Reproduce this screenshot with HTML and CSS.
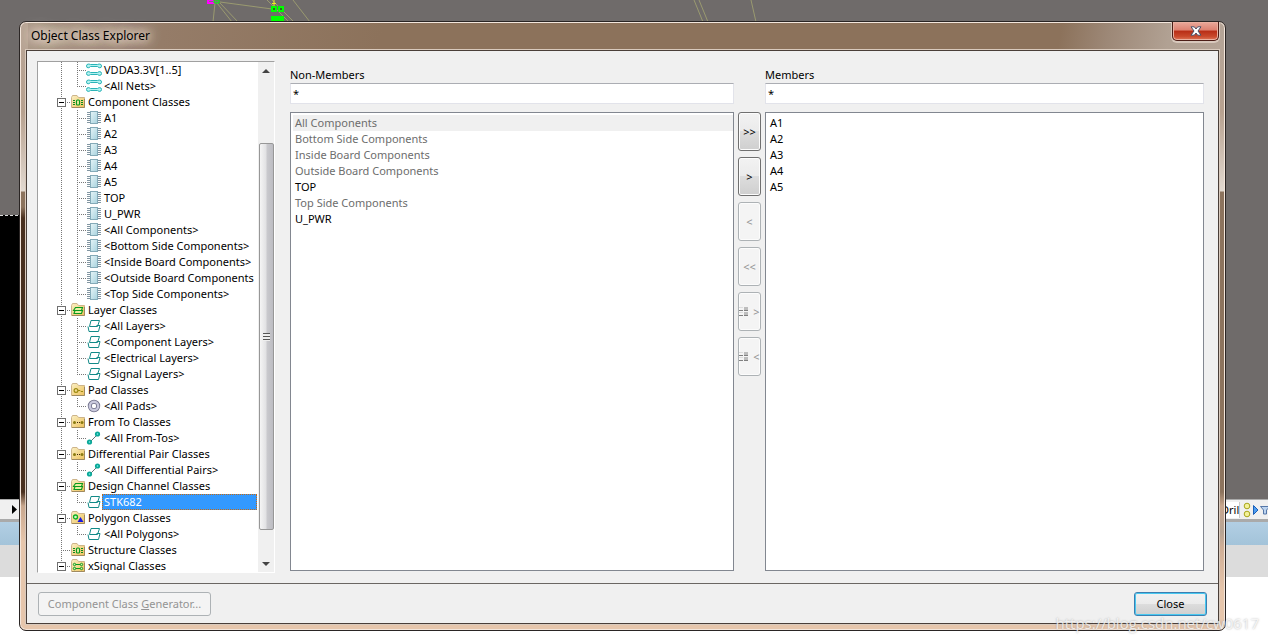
FILE: index.html
```html
<!DOCTYPE html>
<html lang="en">
<head>
<meta charset="utf-8">
<title>Object Class Explorer</title>
<link rel="stylesheet" href="styles.css">
</head>
<body>
<svg class="defs" aria-hidden="true">
  <defs>
    <linearGradient id="gold" x1="0" y1="0" x2="1" y2="1"><stop offset="0" stop-color="#fbf0c4"/><stop offset="1" stop-color="#edc15c"/></linearGradient>
    <linearGradient id="chipfill" x1="0" y1="0" x2="1" y2="1"><stop offset="0" stop-color="#e6f5f8"/><stop offset="1" stop-color="#a8d2de"/></linearGradient>
    <symbol id="folder" viewBox="0 0 14 14">
      <path d="M.5 12.500V2.500L1.500.5H6L7.500 2.500H13.500V12.500Z" fill="url(#gold)" stroke="#cdb48a"/>
      <path d="M1 12.500H13.500V4" fill="none" stroke="#a08a60"/>
    </symbol>
    <symbol id="f-chip" viewBox="0 0 14 14"><use href="#folder"/><path d="M2 5.500h2M2 7.500h2M2 9.500h2M10 5.500h2M10 7.500h2M10 9.500h2" stroke="#0a8a1e"/><rect x="5.500" y="5" width="3" height="5" rx="1" fill="#f4f0a8" stroke="#0a9a1e" stroke-width="1.200"/></symbol>
    <symbol id="f-layer" viewBox="0 0 14 14"><use href="#folder"/><path d="M4.500 4.500H11.500L10.500 7.500H2.500ZM4 7.500H11.500L10.500 10.500H3Z" fill="#e8efa0" stroke="#0a9a1e" stroke-width="1.100"/></symbol>
    <symbol id="f-pad" viewBox="0 0 14 14"><use href="#folder"/><circle cx="5" cy="7.500" r="1.900" fill="none" stroke="#9c8a10" stroke-width="1.200"/><path d="M7 7.500h2l1 1h2" fill="none" stroke="#9c8a10"/></symbol>
    <symbol id="f-dots" viewBox="0 0 14 14"><use href="#folder"/><circle cx="3.500" cy="7.500" r="1.500" fill="#8a7a10"/><circle cx="11" cy="7.500" r="1.500" fill="#8a7a10"/><path d="M6 7.500h1M8 7.500h1" stroke="#402a10" stroke-width="1"/></symbol>
    <symbol id="f-poly" viewBox="0 0 14 14"><use href="#folder"/><circle cx="4.500" cy="6" r="2" fill="#d8f5c8" stroke="#0ab020" stroke-width="1.300"/><path d="M9.500 6L12.500 11H6.500Z" fill="#1818e0"/></symbol>
    <symbol id="f-sig" viewBox="0 0 14 14"><use href="#folder"/><path d="M3 5.500h8M3 9.500h8" stroke="#0a9a1e"/><g fill="#d8f0a8" stroke="#0a9a1e"><circle cx="3.500" cy="5.500" r="1.200"/><circle cx="10.500" cy="5.500" r="1.200"/><circle cx="3.500" cy="9.500" r="1.200"/><circle cx="10.500" cy="9.500" r="1.200"/></g></symbol>
    <symbol id="net" viewBox="0 0 16 14"><g fill="#b4f2f0" stroke="#2ab4b8"><path d="M1 1.500Q3 .5 4.500 1.500H11.500Q13 .5 15 1.500Q16 3 15 4.500Q13 5.500 11.500 3.500H4.500Q3 5.500 1 4.500Q0 3 1 1.500Z"/><path d="M1 9Q3 8 4.500 9.500H11.500Q13 8 15 9Q16 10.500 15 12Q13 13 11.500 11.500H4.500Q3 13 1 12Q0 10.500 1 9Z"/></g></symbol>
    <symbol id="chip" viewBox="0 0 16 14"><path d="M1 1.500h14M1 3.500h14M1 5.500h14M1 7.500h14M1 9.500h14M1 11.500h14" stroke="#8296a2"/><rect x="4.500" y=".5" width="7" height="12" fill="url(#chipfill)" stroke="#84aab8"/></symbol>
    <symbol id="layer" viewBox="0 0 16 14"><path d="M5 1.500H13.500L11.500 7.500H3.500ZM10.500 6.500H14L12.500 12.500H3L2 7.500" fill="none" stroke="#128a88"/></symbol>
    <symbol id="pad" viewBox="0 0 16 14"><circle cx="8" cy="7" r="4.200" fill="none" stroke="#72728c" stroke-width="4"/><circle cx="8" cy="7" r="4.200" fill="none" stroke="#c9c9dd" stroke-width="2.400"/></symbol>
    <symbol id="link" viewBox="0 0 16 14"><path d="M5 10L11 4" stroke="#68747a"/><circle cx="3.500" cy="11" r="2.600" fill="#0aa898"/><circle cx="11.500" cy="3" r="2.600" fill="#0aa898"/><circle cx="11.500" cy="3" r=".8" fill="#8ee"/><circle cx="3.500" cy="11" r=".8" fill="#8ee"/></symbol>
    <symbol id="rows" viewBox="0 0 10 10"><path d="M0 3.500h4M0 8.500h4M5 3.500h4M5 8.500h4" stroke="#808080"/><path d="M0 .5h4M0 5.500h4" stroke="#ddd"/><path d="M5 1.500h4M5 6.500h4" stroke="#bdbdbd" stroke-width="3"/></symbol>
  </defs>
</svg>

<div class="desktop" aria-hidden="true">
  <div class="board">
    <div class="board-top">
      <svg class="traces" width="800" height="22">
        <path d="M215 3L213 22M217 3L232 22M220 3L238 22M220 2L272 9M267 0L289 22M272 0L294 22M293 0L310 22M694 0L703 22M699 0L708 22M751 0L756 22" fill="none" stroke="#9a9a70"/>
        <path d="M208 0h6v3h-6z" fill="#777" stroke="#f0f" stroke-width="2"/><path d="M214 0h5v3h-5z" fill="#777" stroke="#0f0"/>
        <path d="M271 6h6v6h-6zM278 6h6v6h-6zM271 16h13v6h-13z" fill="#0f0"/><path d="M272 3.500h4M274 0v6" stroke="#ee2"/><path d="M273 8h2v2h-2zM280 8h2v2h-2z" fill="#2a6a20"/>
      </svg>
    </div>
    <div class="board-void"></div>
  </div>
  <div class="toolbar">
    <svg class="nudge" width="6" height="9"><path d="M0 0L5 4.500L0 9Z"/></svg>
    <div class="tool-tail"><span class="drill">Dril</span>
      <svg width="26" height="18"><g fill="#f4f29a" stroke="#a9a61c"><circle cx="5" cy="5" r="2.800"/><circle cx="5" cy="13" r="2.800"/></g><path d="M11.500 4.500L16 9L11.500 13.500Z" fill="#4b9cf0" stroke="#1b5fb8"/><path d="M18.500 5.500H28L24.500 9V13H21.500V9Z" fill="#bcd4f0" stroke="#5577a8"/></svg>
    </div>
  </div>
  <div class="band-gray"></div><div class="band-blue"></div><div class="band-light"></div><div class="band-white"></div>
</div>

<main class="dialog" role="dialog" aria-labelledby="dlg-title">
  <header class="titlebar">
    <h1 id="dlg-title" class="title">Object Class Explorer</h1>
    <button class="close-x" type="button" aria-label="Close window"><svg width="12" height="10"><path d="M1 .8H4.300L6 3L7.700 .8H11L8 5L11 9.200H7.700L6 7L4.300 9.200H1L4 5Z" fill="#fff" stroke="#4a5068"/></svg></button>
  </header>
  <div class="client">
    <div class="content">
      <nav class="tree-box" aria-label="Object classes">
        <ul class="tree">
          <li class="group"><ul class="kids">
            <li class="leaf"><svg class="ico"><use href="#net"/></svg><span class="label">VDDA3.3V[1..5]</span></li>
            <li class="leaf"><svg class="ico"><use href="#net"/></svg><span class="label">&lt;All Nets&gt;</span></li>
          </ul></li>
          <li class="group"><div class="node"><button class="toggle" type="button" aria-label="Collapse"></button><svg class="fico"><use href="#f-chip"/></svg><span>Component Classes</span></div><ul class="kids">
            <li class="leaf"><svg class="ico"><use href="#chip"/></svg><span class="label">A1</span></li>
            <li class="leaf"><svg class="ico"><use href="#chip"/></svg><span class="label">A2</span></li>
            <li class="leaf"><svg class="ico"><use href="#chip"/></svg><span class="label">A3</span></li>
            <li class="leaf"><svg class="ico"><use href="#chip"/></svg><span class="label">A4</span></li>
            <li class="leaf"><svg class="ico"><use href="#chip"/></svg><span class="label">A5</span></li>
            <li class="leaf"><svg class="ico"><use href="#chip"/></svg><span class="label">TOP</span></li>
            <li class="leaf"><svg class="ico"><use href="#chip"/></svg><span class="label">U_PWR</span></li>
            <li class="leaf"><svg class="ico"><use href="#chip"/></svg><span class="label">&lt;All Components&gt;</span></li>
            <li class="leaf"><svg class="ico"><use href="#chip"/></svg><span class="label">&lt;Bottom Side Components&gt;</span></li>
            <li class="leaf"><svg class="ico"><use href="#chip"/></svg><span class="label">&lt;Inside Board Components&gt;</span></li>
            <li class="leaf"><svg class="ico"><use href="#chip"/></svg><span class="label">&lt;Outside Board Components</span></li>
            <li class="leaf"><svg class="ico"><use href="#chip"/></svg><span class="label">&lt;Top Side Components&gt;</span></li>
          </ul></li>
          <li class="group"><div class="node"><button class="toggle" type="button" aria-label="Collapse"></button><svg class="fico"><use href="#f-layer"/></svg><span>Layer Classes</span></div><ul class="kids">
            <li class="leaf"><svg class="ico"><use href="#layer"/></svg><span class="label">&lt;All Layers&gt;</span></li>
            <li class="leaf"><svg class="ico"><use href="#layer"/></svg><span class="label">&lt;Component Layers&gt;</span></li>
            <li class="leaf"><svg class="ico"><use href="#layer"/></svg><span class="label">&lt;Electrical Layers&gt;</span></li>
            <li class="leaf"><svg class="ico"><use href="#layer"/></svg><span class="label">&lt;Signal Layers&gt;</span></li>
          </ul></li>
          <li class="group"><div class="node"><button class="toggle" type="button" aria-label="Collapse"></button><svg class="fico"><use href="#f-pad"/></svg><span>Pad Classes</span></div><ul class="kids">
            <li class="leaf"><svg class="ico"><use href="#pad"/></svg><span class="label">&lt;All Pads&gt;</span></li>
          </ul></li>
          <li class="group"><div class="node"><button class="toggle" type="button" aria-label="Collapse"></button><svg class="fico"><use href="#f-dots"/></svg><span>From To Classes</span></div><ul class="kids">
            <li class="leaf"><svg class="ico"><use href="#link"/></svg><span class="label">&lt;All From-Tos&gt;</span></li>
          </ul></li>
          <li class="group"><div class="node"><button class="toggle" type="button" aria-label="Collapse"></button><svg class="fico"><use href="#f-dots"/></svg><span>Differential Pair Classes</span></div><ul class="kids">
            <li class="leaf"><svg class="ico"><use href="#link"/></svg><span class="label">&lt;All Differential Pairs&gt;</span></li>
          </ul></li>
          <li class="group"><div class="node"><button class="toggle" type="button" aria-label="Collapse"></button><svg class="fico"><use href="#f-layer"/></svg><span>Design Channel Classes</span></div><ul class="kids">
            <li class="leaf"><svg class="ico"><use href="#layer"/></svg><span class="label selected">STK682</span></li>
          </ul></li>
          <li class="group"><div class="node"><button class="toggle" type="button" aria-label="Collapse"></button><svg class="fico"><use href="#f-poly"/></svg><span>Polygon Classes</span></div><ul class="kids">
            <li class="leaf"><svg class="ico"><use href="#layer"/></svg><span class="label">&lt;All Polygons&gt;</span></li>
          </ul></li>
          <li class="group"><div class="node"><span class="no-toggle"></span><svg class="fico"><use href="#f-chip"/></svg><span>Structure Classes</span></div></li>
          <li class="group"><div class="node"><button class="toggle" type="button" aria-label="Collapse"></button><svg class="fico"><use href="#f-sig"/></svg><span>xSignal Classes</span></div></li>
        </ul>
        <div class="scrollbar" aria-hidden="true">
          <svg class="arrow" width="8" height="4"><path d="M0 4L4 0L8 4Z" fill="#444"/></svg>
          <div class="track"><div class="thumb"><span class="grip"></span></div></div>
          <svg class="arrow" width="8" height="4"><path d="M0 0L4 4L8 0Z" fill="#444"/></svg>
        </div>
      </nav>
      <div class="transfer">
        <div class="field"><label for="nm">Non-Members</label><input id="nm" type="text" value="*"></div>
        <div class="field members"><label for="mm">Members</label><input id="mm" type="text" value="*"></div>
        <ul class="list" aria-label="Non-Members">
          <li class="item fixed hot">All Components</li>
          <li class="item fixed">Bottom Side Components</li>
          <li class="item fixed">Inside Board Components</li>
          <li class="item fixed">Outside Board Components</li>
          <li class="item">TOP</li>
          <li class="item fixed">Top Side Components</li>
          <li class="item">U_PWR</li>
        </ul>
        <div class="moves">
          <button class="move" type="button">&gt;&gt;</button>
          <button class="move" type="button">&gt;</button>
          <button class="move" type="button" disabled>&lt;</button>
          <button class="move" type="button" disabled>&lt;&lt;</button>
          <button class="move with-icon" type="button" disabled><svg width="10" height="10"><use href="#rows"/></svg>&gt;</button>
          <button class="move with-icon" type="button" disabled><svg width="10" height="10"><use href="#rows"/></svg>&lt;</button>
        </div>
        <ul class="list" aria-label="Members">
          <li class="item">A1</li>
          <li class="item">A2</li>
          <li class="item">A3</li>
          <li class="item">A4</li>
          <li class="item">A5</li>
        </ul>
      </div>
    </div>
    <footer class="footer">
      <button class="btn generator" type="button" disabled>Component Class <u>G</u>enerator...</button>
      <button class="btn primary" type="button">Close</button>
    </footer>
  </div>
</main>
<div class="watermark">https://blog.csdn.net/cw0617</div>
</body>
</html>
```

FILE: styles.css
```css
* { box-sizing: border-box; }
html { height: 100%; }
body {
  position: relative;
  display: flex;
  height: 100%;
  min-height: 600px;
  margin: 0;
  padding: 21px 42px 10px 19px;
  overflow: hidden;
  font: 11px/16px "Noto Sans", "Open Sans", sans-serif;
  color: #000;
}
ul { list-style: none; margin: 0; padding: 0; }
button, input { font: inherit; color: inherit; }
.defs { position: absolute; width: 0; height: 0; }

/* Application behind the dialog */
.desktop {
  position: absolute;
  inset: 0;
  display: grid;
  grid-template-rows: 1fr 20px 3px 23px 32px 64px;
}
.board { display: flex; flex-direction: column; background: #6f6b6a; }
.board-top { flex: 215; }
.board-void { flex: 284; width: 50%; background: #000; border-top: 1px dashed #ddd; }
.traces { display: block; }
.toolbar {
  display: flex;
  align-items: center;
  justify-content: space-between;
  padding-left: 12px;
  background: #f0f0f0;
  border-top: 1px solid #aaa;
}
.tool-tail { display: flex; align-items: center; }
.drill { width: 19px; background: #fff; border-right: 1px solid #ccc; margin-right: 2px; }
.band-gray { background: #aaa; }
.band-blue { background: linear-gradient(#b2cfe4, #a3c3d9); }
.band-light { background: #dcdcdc; }
.band-white { background: #fff; }

/* Window frame */
.dialog {
  position: relative;
  display: flex;
  flex: 1;
  flex-direction: column;
  padding: 0 6px;
  padding-bottom: 6px;
  border: 1px solid #2a2524;
  border-radius: 7px;
  box-shadow: inset 0 0 0 1px #f3e6dc;
  background:
    linear-gradient(#b8a494 0 28px, #b7a18f 90px, #e2d9d0 169px, #8c735d 170px 185px, #49301f 196px 470px, #c8a78e 484px, #e6c6ac 520px) left / 8px 100% no-repeat,
    linear-gradient(#b5a496 0 28px, #b7a18f 90px, #e2d9d0 169px, #8c735d 170px 470px, #c8a78e 484px, #b5a393 510px, #cfae96 525px, #e6c6ac 570px) right / 8px 100% no-repeat,
    linear-gradient(100deg, #ad998a, #957c68 12%, #8c725b 30% 86%, #9d8877 90%, #b1a193 95%, #b5a496) top / 100% 40px no-repeat,
    #e6c6ac;
}
.titlebar {
  display: flex;
  justify-content: space-between;
  align-items: flex-start;
  height: 28px;
  padding: 0 0 0 5px;
}
.title {
  margin: 5px 0 0;
  font: 12px/18px "Noto Sans", "Open Sans", sans-serif;
  text-shadow: 0 0 8px #eee0d4, 0 0 10px #eee0d4, 0 0 14px #eee0d4, 0 0 18px #eee0d4;
}
.close-x {
  display: grid;
  place-items: center;
  width: 47px;
  height: 19px;
  padding: 0;
  border: 1px solid #4c1d16;
  border-top: 0;
  border-radius: 0 0 5px 5px;
  box-shadow: inset 0 0 0 1px #eab0a0, 0 1px 0 1px #d8c8bc;
  background: linear-gradient(#eaa99b, #dd8170 45%, #b82d16 50%, #c9492c 80%, #df7759);
}
.client {
  display: flex;
  flex: 1;
  flex-direction: column;
  min-height: 0;
  border: 1px solid #4a3f39;
  box-shadow: 0 0 0 1px #d9cabd;
  background: #f0f0f0;
}
.content {
  display: flex;
  flex: 1;
  gap: 15px;
  min-height: 0;
  padding: 10px 14px 10px 10px;
}

/* Class tree */
.tree-box {
  display: flex;
  width: 238px;
  border: 1px solid #a0a0a0;
  border-right-color: #fff;
  border-bottom-color: #fff;
  background: #fff;
  overflow: hidden;
}
.tree { flex: 1; min-width: 0; overflow: hidden; padding-right: 1px; white-space: nowrap; }
.group { background: repeating-linear-gradient(#777 0 1px, #fff 1px 2px) 23px 0 / 1px 100% no-repeat; }
.kids { background: repeating-linear-gradient(#777 0 1px, transparent 1px 2px) 39px 0 / 1px calc(100% - 7px) no-repeat; }
.node, .leaf { display: flex; align-items: center; height: 16px; }
.node {
  padding-left: 19px;
  background: repeating-linear-gradient(90deg, #777 0 1px, transparent 1px 2px) 23px 8px / 10px 1px no-repeat;
}
.leaf {
  padding-left: 48px;
  background: repeating-linear-gradient(90deg, #777 0 1px, transparent 1px 2px) 39px 8px / 9px 1px no-repeat;
}
.toggle, .no-toggle { flex: none; width: 9px; height: 9px; }
.toggle {
  padding: 0;
  border: 1px solid #707070;
  background: linear-gradient(#000, #000) center / 5px 1px no-repeat #fff;
}
.ico { flex: none; width: 16px; height: 14px; }
.fico { flex: none; width: 14px; height: 14px; margin: 0 3px 0 5px; }
.label { flex: 1; padding-left: 2px; }
.selected {
  height: 16px;
  background: #3399ff;
  color: #fff;
  outline: 1px dotted #c86a10;
  outline-offset: -1px;
}
.scrollbar {
  display: flex;
  flex-direction: column;
  align-items: center;
  width: 16px;
  padding: 7px 0 6px;
  background: #f0f0f0;
}
.arrow { flex: none; }
.track {
  display: grid;
  grid-template-rows: 70fr 386fr 32fr;
  flex: 1;
  width: 15px;
}
.thumb {
  grid-row: 2;
  display: grid;
  place-items: center;
  border: 1px solid #979797;
  border-radius: 2px;
  background: linear-gradient(90deg, #f5f5f5, #e2e2e4 45%, #c9c9cd 55%, #bcbcc2);
}
.grip { width: 7px; height: 8px; background: repeating-linear-gradient(#555 0 1px, #eee 1px 3px); }

/* Non-members / members transfer area */
.transfer {
  display: grid;
  flex: 1;
  grid-template-columns: 444fr 23px 439fr;
  grid-template-rows: auto 1fr;
  gap: 8px 4px;
  min-width: 0;
  padding: 6px 0 2px;
}
.field { display: flex; flex-direction: column; }
.members { grid-column: 3; }
.field input {
  width: 100%;
  height: 21px;
  padding: 0 2px;
  border: 1px solid #e2e3ea;
  border-top-color: #abadb3;
  background: #fff;
}
.list {
  padding: 2px 0 2px 2px;
  border: 1px solid #828790;
  background: #fff;
  overflow: hidden;
}
.item { padding-left: 2px; }
.fixed { color: #6d6d6d; }
.hot { background: #f0f0f0; }
.moves { display: flex; flex-direction: column; gap: 6px; }
.move {
  display: flex;
  align-items: center;
  justify-content: center;
  gap: 4px;
  height: 39px;
  padding: 0;
  border: 1px solid #707070;
  border-radius: 3px;
  box-shadow: inset 0 0 0 1px #fcfcfc;
  background: linear-gradient(#f2f2f2, #ebebeb 49%, #dddddd 50%, #cfcfcf);
}
.move:disabled, .btn:disabled { border-color: #adb2b5; background: #f4f4f4; color: #939393; }

/* Bottom bar */
.footer {
  display: flex;
  align-items: center;
  justify-content: space-between;
  height: 40px;
  padding: 0 11px;
  border-top: 1px solid #6a6663;
}
.btn {
  height: 24px;
  padding: 0 8px;
  border: 1px solid #707070;
  border-radius: 3px;
}
.generator { width: 173px; white-space: nowrap; }
.primary {
  width: 73px;
  border-color: #3c7fb1;
  box-shadow: inset 0 0 0 1px #48c8f0;
  background: linear-gradient(#f2f2f2, #ebebeb 49%, #dddddd 50%, #cfcfcf);
}
.watermark {
  position: absolute;
  right: 9px;
  bottom: 8px;
  font: 15px/20px "Open Sans", sans-serif;
  color: rgba(255, 255, 255, 0.75);
  text-shadow: 0 0 2px rgba(120, 120, 120, 0.6);
  pointer-events: none;
}
```
